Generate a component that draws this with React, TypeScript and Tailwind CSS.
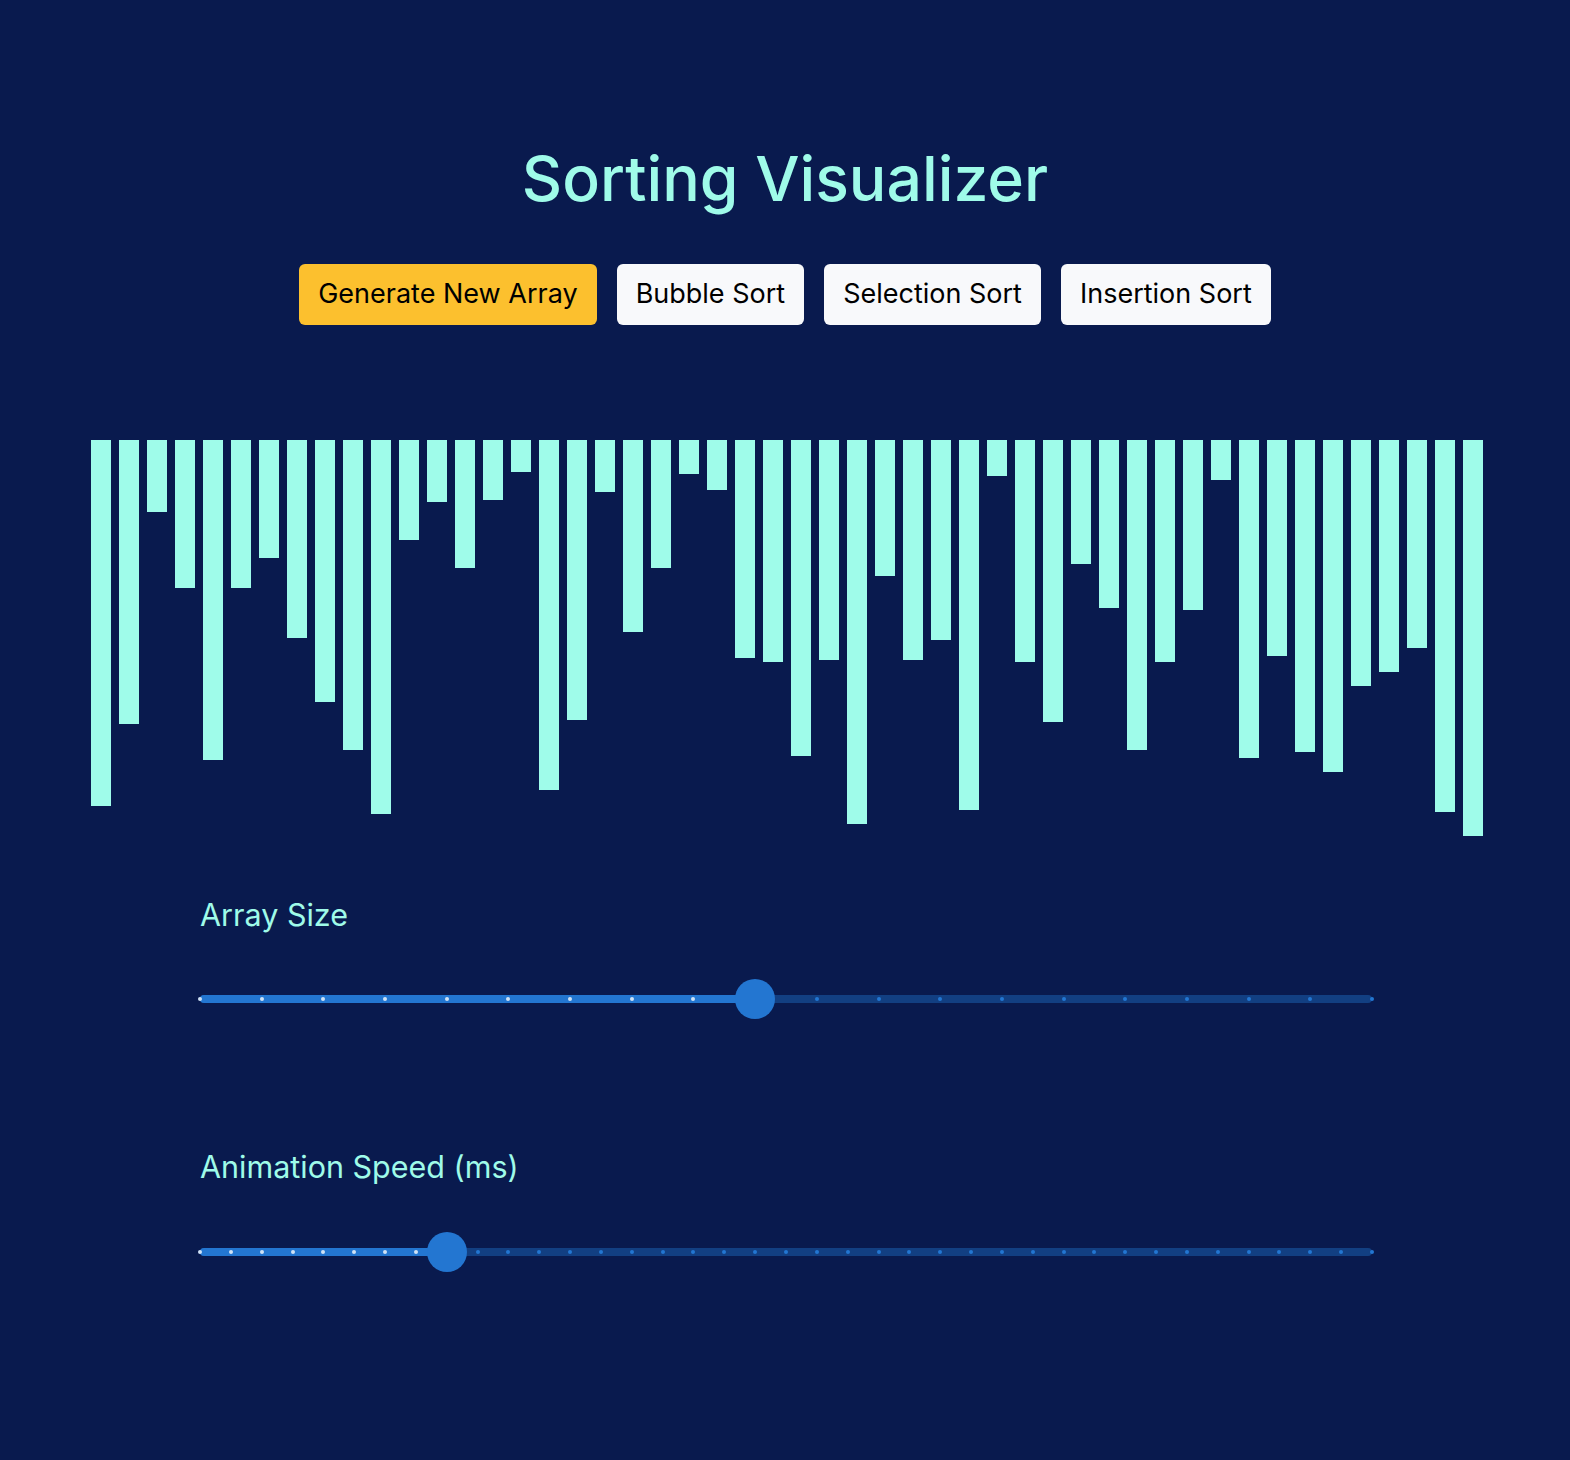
import { useState, type FC } from "react";

const startBars = [
  366, 284, 72, 148, 320, 148, 118, 198, 262, 310, 374, 100, 62, 128, 60, 32,
  350, 280, 52, 192, 128, 34, 50, 218, 222, 316, 220, 384, 136, 220, 200, 370,
  36, 222, 282, 124, 168, 310, 222, 170, 40, 318, 216, 312, 332, 246, 232, 208,
  372, 396,
];

type SliderProps = {
  min: number;
  max: number;
  step: number;
  value: number;
  onChange: (v: number) => void;
};

const MarkSlider: FC<SliderProps> = ({ min, max, step, value, onChange }) => {
  const count = Math.round((max - min) / step);
  const pct = ((value - min) / (max - min)) * 100;
  const marks = Array.from({ length: count + 1 }, (_, i) => i);

  return (
    <div className="relative h-10 w-[1172px]">
      {/* rail */}
      <div className="absolute left-0 right-0 top-1/2 h-2 -translate-y-1/2 rounded-full bg-[#123f82]" />
      {/* track */}
      <div
        className="absolute left-0 top-1/2 h-2 -translate-y-1/2 rounded-full bg-[#2376d1]"
        style={{ width: `${pct}%` }}
      />
      {marks.map((i) => {
        const left = (i / count) * 100;
        return (
          <span
            key={i}
            className={`absolute top-1/2 h-1 w-1 -translate-x-1/2 -translate-y-1/2 rounded-full ${
              left <= pct ? "bg-[#d0e2f6]" : "bg-[#2376d1]"
            }`}
            style={{ left: `${left}%` }}
          />
        );
      })}
      {/* thumb */}
      <span
        className="absolute top-1/2 h-10 w-10 -translate-x-1/2 -translate-y-1/2 rounded-full bg-[#2376d1]"
        style={{ left: `${pct}%` }}
      />
      <input
        type="range"
        min={min}
        max={max}
        step={step}
        value={value}
        onChange={(e) => onChange(Number(e.target.value))}
        className="absolute inset-0 h-full w-full cursor-pointer opacity-0"
      />
    </div>
  );
};

const App: FC = () => {
  const [bars, setBars] = useState<number[]>(startBars);
  const [size, setSize] = useState(100);
  const [speed, setSpeed] = useState(50);

  const generate = () => {
    setBars(Array.from({ length: 50 }, () => 2 * (10 + Math.floor(Math.random() * 190))));
  };

  return (
    <div className="flex min-h-screen flex-col items-center bg-[#091a4e] pb-20 font-['Inter',sans-serif]">
      <h1 className="pt-[140px] text-[62.5px] font-medium leading-[77px] text-[#9ffbe9]">
        Sorting Visualizer
      </h1>

      <div className="mt-[47px] flex gap-5">
        <button
          onClick={generate}
          className="flex h-[61px] items-center rounded-md bg-[#fcc02e] px-[19px] text-[27px] text-black"
        >
          Generate New Array
        </button>
        <button className="flex h-[61px] items-center rounded-md bg-[#f8f9fb] px-[19px] text-[27px] text-black">
          Bubble Sort
        </button>
        <button className="flex h-[61px] items-center rounded-md bg-[#f8f9fb] px-[19px] text-[27px] text-black">
          Selection Sort
        </button>
        <button className="flex h-[61px] items-center rounded-md bg-[#f8f9fb] px-[19px] text-[27px] text-black">
          Insertion Sort
        </button>
      </div>

      {/* bars hang from the top edge */}
      <div className="mt-[115px] flex w-full items-start justify-center pl-1">
        {bars.map((h, i) => (
          <div key={i} className="mx-1 w-5 bg-[#9ffcea]" style={{ height: h }} />
        ))}
      </div>

      <div className="mt-[61px] flex w-[1174px] flex-col pl-[2px]">
        <label className="text-[30.5px] leading-9 text-[#9ffbe9]">Array Size</label>
        <div className="mt-[46px]">
          <MarkSlider min={10} max={200} step={10} value={size} onChange={setSize} />
        </div>

        <label className="mt-[130px] text-[30.5px] leading-9 text-[#9ffbe9]">Animation Speed (ms)</label>
        <div className="mt-[47px]">
          <MarkSlider min={10} max={200} step={5} value={speed} onChange={setSpeed} />
        </div>
      </div>
    </div>
  );
};

export default App;
